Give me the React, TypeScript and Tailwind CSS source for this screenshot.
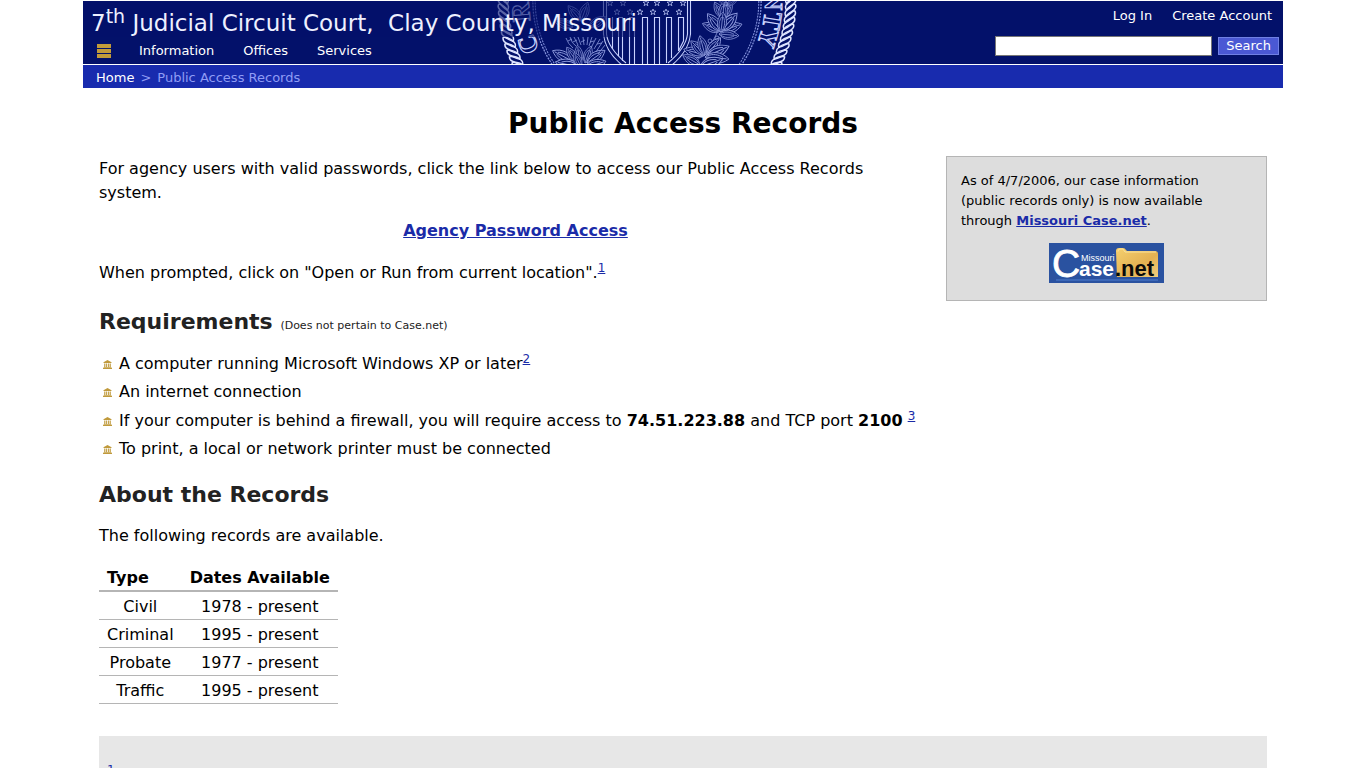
import React, { useState } from "react";

const records = [
  { type: "Civil", dates: "1978 - present" },
  { type: "Criminal", dates: "1995 - present" },
  { type: "Probate", dates: "1977 - present" },
  { type: "Traffic", dates: "1995 - present" },
];

const navItems = ["Information", "Offices", "Services"];

const rad = (deg: number) => (deg * Math.PI) / 180;

// angles are measured clockwise from 12 o'clock around the seal's centre (150, 0)
const onRing = (radius: number, angle: number) =>
  `translate(${150 + radius * Math.sin(rad(angle))} ${-radius * Math.cos(rad(angle))}) rotate(${angle})`;

const rightRope = Array.from({ length: 16 }, (_, i) => 86 + i * 2.6);
const leftRope = Array.from({ length: 16 }, (_, i) => 274 - i * 2.6);

const letters = [
  { char: "N", angle: 90 },
  { char: "T", angle: 99 },
  { char: "Y", angle: 107 },
  { char: "R", angle: 265 },
  { char: "C", angle: 250 },
];

const stars = [
  [120, 11], [133, 11], [143, 11], [156, 11], [169, 11], [182, 11],
  [113, 2], [126, 2], [149, 2], [160, 2], [173, 2], [186, 2],
];

const Leaf = ({ x, y, angle, size = 1 }: { x: number; y: number; angle: number; size?: number }) => (
  <g transform={`translate(${x} ${y}) rotate(${angle}) scale(${size})`}>
    <path d="M0 0C-6 -5 -6 -13 0 -20C6 -13 6 -5 0 0Z" fill="#03116a" />
    <path d="M0 0V-18M-1 -2C-3.5 -6 -3 -11 -1 -15M1 -2C3.5 -6 3 -11 1 -15" />
  </g>
);

const Seal = () => (
  <svg
    className="absolute left-[414px] top-0 h-full w-[300px]"
    viewBox="0 0 300 63"
    preserveAspectRatio="xMinYMin slice"
    fill="none"
    stroke="#8c99dc"
    strokeWidth="0.8"
    aria-hidden="true"
  >
    {/* rope border */}
    <g stroke="#dfe5ff" strokeWidth="1.5">
      {rightRope.map((a) => (
        <path key={a} transform={onRing(144, a)} d="M-7 -4C-4 -6 -1 -4 1 -1S5 5 7 4M-7 -4C-6 -1 -3 0 -1 3S4 6 7 4" />
      ))}
      {leftRope.map((a) => (
        <path key={a} transform={onRing(144, a)} d="M7 -4C4 -6 1 -4 -1 -1S-5 5 -7 4M7 -4C6 -1 3 0 1 3S-4 6 -7 4" />
      ))}
    </g>
    {/* beaded inner ring */}
    <circle cx="150" cy="0" r="113" strokeWidth="3.500" strokeDasharray="2 1" stroke="#8492dc" />
    <circle cx="150" cy="0" r="113" strokeWidth="1.200" stroke="#03116a" />
    {/* ring lettering */}
    <g fontFamily="Liberation Serif, serif" fontWeight="bold" fontSize="26" stroke="#cdd5ff" strokeWidth="1.100" textAnchor="middle">
      {letters.map(({ char, angle }) => (
        <text key={char} transform={onRing(118, angle)}>{char}</text>
      ))}
    </g>
    {/* shield */}
    <g stroke="#c9d2ff" strokeWidth="1.100">
      <path d="M193.500 0V33Q192 50 175 64M190.500 0V33Q189 47 171 62" />
      <path d="M106.500 0V33Q108 50 125 64M109.500 0V33Q111 47 129 62" />
      <path d="M121.500 55V16.500H125.500V60M132.500 64V16.500H137.500V64M145.500 64V16.500H150.500V64M157.500 64V16.500H162.500V64M169.500 62V16.500H174.500V57M181.500 50V16.500H186.500V40L181.500 50M115.500 16V48" />
      {stars.map(([x, y]) => (
        <path
          key={`${x}-${y}`}
          transform={`translate(${x} ${y})`}
          d="M0 -3L.8 -.9H3L1.200 .5L1.900 2.700L0 1.400L-1.900 2.700L-1.200 .5L-3 -.9H-.8Z"
          strokeWidth="0.7"
        />
      ))}
    </g>
    {/* olive branch, right of the shield */}
    <g>
      <path d="M233 -2C231 8 226 20 218 36S205 56 190 66" />
      <Leaf x={226} y={17} angle={-28} size={0.9} />
      <Leaf x={226} y={17} angle={30} size={0.9} />
      <Leaf x={226} y={20} angle={2} />
      <Leaf x={224} y={30} angle={-68} />
      <Leaf x={224} y={30} angle={-38} size={1.1} />
      <Leaf x={224} y={30} angle={72} size={1.1} />
      <Leaf x={224} y={30} angle={42} size={1.2} />
      <Leaf x={224} y={31} angle={6} />
      <Leaf x={222} y={33} angle={95} />
      <Leaf x={230} y={4} angle={60} size={0.6} />
      <Leaf x={230} y={4} angle={-50} size={0.6} />
      <Leaf x={208} y={54} angle={-75} size={1.1} />
      <Leaf x={208} y={54} angle={-45} />
      <Leaf x={208} y={54} angle={-15} />
      <Leaf x={210} y={54} angle={38} size={1.1} />
      <Leaf x={210} y={55} angle={66} size={1.2} />
      <Leaf x={208} y={56} angle={95} size={1.2} />
      <Leaf x={203} y={64} angle={-60} />
      <Leaf x={203} y={66} angle={70} size={1.2} />
      <circle cx="220" cy="37" r="2" />
      <circle cx="213" cy="40" r="2" />
      <circle cx="229" cy="3" r="2" />
    </g>
    {/* plumage and leaves, left of the shield */}
    <g>
      <Leaf x={84} y={20} angle={-40} />
      <Leaf x={84} y={20} angle={20} />
      <Leaf x={76} y={26} angle={-70} />
      <Leaf x={92} y={26} angle={60} />
      <Leaf x={75} y={60} angle={-62} size={1.1} />
      <Leaf x={80} y={61} angle={-35} size={0.9} />
      <Leaf x={83} y={62} angle={-8} size={0.9} />
      <Leaf x={88} y={62} angle={20} size={0.9} />
      <Leaf x={90} y={62} angle={55} size={1.1} />
      <Leaf x={82} y={66} angle={-78} size={1.2} />
      <Leaf x={84} y={66} angle={-25} size={0.8} />
      <Leaf x={88} y={67} angle={72} size={1.1} />
      <path d="M69 37Q71 43 76 47M73 36Q75 43 79 45M77 36L81 44M81 36L84 44M86 36L87 44M91 36L90 44M95 36L92 45M99 37L94 47M103 38L97 48M106 40L99 51M108 44L101 53M71 40L75 38M76 41L80 39M84 41L88 39M93 41L97 40M100 43L105 42" />
    </g>
  </svg>
);

const CourthouseBullet = () => (
  <svg className="h-[9px] w-[9px] shrink-0" viewBox="0 0 9 9" fill="#c09a3c" aria-hidden="true">
    <path d="M4.500 0L8.500 2.200V3H.5V2.200ZM1.200 3.500H2.400V7H1.200ZM3.100 3.500H4.100V7H3.100ZM4.900 3.500H5.900V7H4.900ZM6.600 3.500H7.800V7H6.600ZM.5 7.200H8.500V8H.5ZM0 8H9V9H0Z" />
  </svg>
);

const CaseNetLogo = () => (
  <svg className="h-10 w-[115px]" viewBox="0 0 115 40" role="img" aria-label="Missouri Case.net">
    <defs>
      <linearGradient id="folder" x1="0" y1="0" x2="1" y2="1">
        <stop offset="0" stopColor="#f5d06f" />
        <stop offset="0.6" stopColor="#e3b152" />
        <stop offset="1" stopColor="#f0cf7e" />
      </linearGradient>
    </defs>
    <rect width="115" height="40" fill="#2a52a0" />
    <path d="M67 8Q67 5 70 5H74Q76 5 77 7L78 8H106Q109 8 109 11V34H68Z" fill="url(#folder)" />
    <path d="M69 8.500Q69 6 71 6H74L76 9H107" fill="none" stroke="#fae39c" />
    <path d="M7 37H109" stroke="#4f7ed0" />
    <g fontFamily="Liberation Sans, Arial, sans-serif">
      <text x="3" y="34" fontSize="39" fill="#fff" stroke="#fff" strokeWidth="0.8">C</text>
      <text x="32" y="18" fontSize="9" fill="#fff">Missouri</text>
      <text x="30" y="33" fontSize="21" fontWeight="bold" fill="#fff">ase</text>
      <text x="66" y="33" fontSize="22" fontWeight="bold" fill="#0a0a0a">.net</text>
    </g>
  </svg>
);

const NoteLink = ({ n }: { n: number }) => (
  <sup className="text-xs">
    <a href={`#note${n}`} className="text-[#1a2ba8] underline">{n}</a>
  </sup>
);

const App = () => {
  const [query, setQuery] = useState("");

  return (
    <div className="min-h-screen bg-white pt-px font-['DejaVu_Sans',Verdana,sans-serif] text-base text-black">
      <div className="mx-auto max-w-[1200px]">
        <header className="relative flex h-[63px] justify-between overflow-hidden bg-[#03116a] text-white">
          <Seal />
          <div className="relative flex flex-col">
            <div className="h-9 bg-[#03116a]/60 pl-2 text-[23px] leading-[44px] text-[#eef0ff]">
              7<sup className="-top-2 text-[19px]">th</sup> Judicial Circuit Court,&nbsp; Clay County, Missouri
            </div>
            <nav className="flex h-7 items-center pl-[14px] text-[13px]">
              <button type="button" aria-label="Menu" className="mr-7 flex flex-col gap-px">
                <span className="h-1 w-[14px] bg-[#c29b3a]" />
                <span className="h-1 w-[14px] bg-[#c29b3a]" />
                <span className="h-1 w-[14px] bg-[#c29b3a]" />
              </button>
              <div className="flex gap-[29px]">
                {navItems.map((item) => (
                  <a key={item} href="#">{item}</a>
                ))}
              </div>
            </nav>
          </div>
          <div className="relative flex flex-col items-end pr-1 text-[13px]">
            <div className="flex h-[35px] gap-5 pr-[7px] leading-[30px]">
              <a href="#">Log In</a>
              <a href="#">Create Account</a>
            </div>
            <form className="flex items-center gap-1.5" onSubmit={(e) => e.preventDefault()}>
              <input
                type="text"
                aria-label="Search"
                value={query}
                onChange={(e) => setQuery(e.target.value)}
                className="h-5 w-[217px] border border-[#767676] bg-white px-1 text-black"
              />
              <button type="submit" className="h-[18px] border border-[#7080e4] bg-[#4a58d4] px-[7px] leading-4">
                Search
              </button>
            </form>
          </div>
        </header>

        <nav className="mt-px flex h-[23px] gap-1.5 bg-[#182bae] pl-[13px] text-[13px] leading-[26px] text-[#8f9cf5]">
          <a href="#" className="text-white">Home</a>
          <span>&gt;</span>
          <span>Public Access Records</span>
        </nav>

        <main className="px-4">
          <h1 className="mt-[17px] text-center text-[28px] leading-[38px] font-bold">Public Access Records</h1>

          <div className="mt-[13px] flex items-start gap-[14px]">
            <div className="flex-1 pt-px">
              <p className="max-w-[800px]">
                For agency users with valid passwords, click the link below to access our Public Access Records system.
              </p>
              <p className="mt-[14px] text-center font-bold">
                <a href="#" className="text-[#1a2ba8] underline">Agency Password Access</a>
              </p>
              <p className="mt-[18px]">
                When prompted, click on "Open or Run from current location".<NoteLink n={1} />
              </p>

              <h2 className="mt-[22px] text-[22px] leading-[30px] font-bold text-[#222]">
                Requirements <small className="text-[11px] font-normal">(Does not pertain to Case.net)</small>
              </h2>
              <ul className="mt-[9px] pl-1">
                <li className="flex h-7 items-center gap-[7px]">
                  <CourthouseBullet />
                  <span>A computer running Microsoft Windows XP or later<NoteLink n={2} /></span>
                </li>
                <li className="flex h-7 items-center gap-[7px]">
                  <CourthouseBullet />
                  <span>An internet connection</span>
                </li>
                <li className="flex h-[30px] items-center gap-[7px]">
                  <CourthouseBullet />
                  <span>
                    If your computer is behind a firewall, you will require access to <b>74.51.223.88</b> and TCP port{" "}
                    <b>2100</b> <NoteLink n={3} />
                  </span>
                </li>
                <li className="flex h-[26px] items-center gap-[7px]">
                  <CourthouseBullet />
                  <span>To print, a local or network printer must be connected</span>
                </li>
              </ul>
            </div>

            <aside className="w-[321px] shrink-0 border border-[#b5b5b5] bg-[#ddd] px-[14px] pt-[14px] pb-[17px] text-[13px] leading-5">
              <p className="max-w-[270px]">
                As of 4/7/2006, our case information (public records only) is now available through{" "}
                <a href="#" className="font-bold text-[#1a2ba8] underline">Missouri Case.net</a>.
              </p>
              <a href="#" className="mt-3 flex justify-center">
                <CaseNetLogo />
              </a>
            </aside>
          </div>

          <h2 className="mt-[18px] text-[22px] leading-[30px] font-bold text-[#222]">About the Records</h2>
          <p className="mt-[14px]">The following records are available.</p>

          <table className="mt-4 border-collapse text-center">
            <thead>
              <tr className="border-b-2 border-[#b5b5b5]">
                <th className="px-2 pt-0.5 text-left">Type</th>
                <th className="px-2 pt-0.5">Dates Available</th>
              </tr>
            </thead>
            <tbody>
              {records.map((record) => (
                <tr key={record.type} className="h-7 border-b border-[#b5b5b5]">
                  <td className="px-2 pt-[3px]">{record.type}</td>
                  <td className="px-2 pt-[3px]">{record.dates}</td>
                </tr>
              ))}
            </tbody>
          </table>

          <footer className="mt-8 bg-[#e7e7e7] px-2 pt-[30px] pb-4 text-[13px] leading-5">
            <p id="note1">
              <NoteLink n={1} /> This will only need to be done the first time the link is opened on your computer; after
              you accept the file, the link will start the program.
            </p>
          </footer>
        </main>
      </div>
    </div>
  );
};

export default App;
